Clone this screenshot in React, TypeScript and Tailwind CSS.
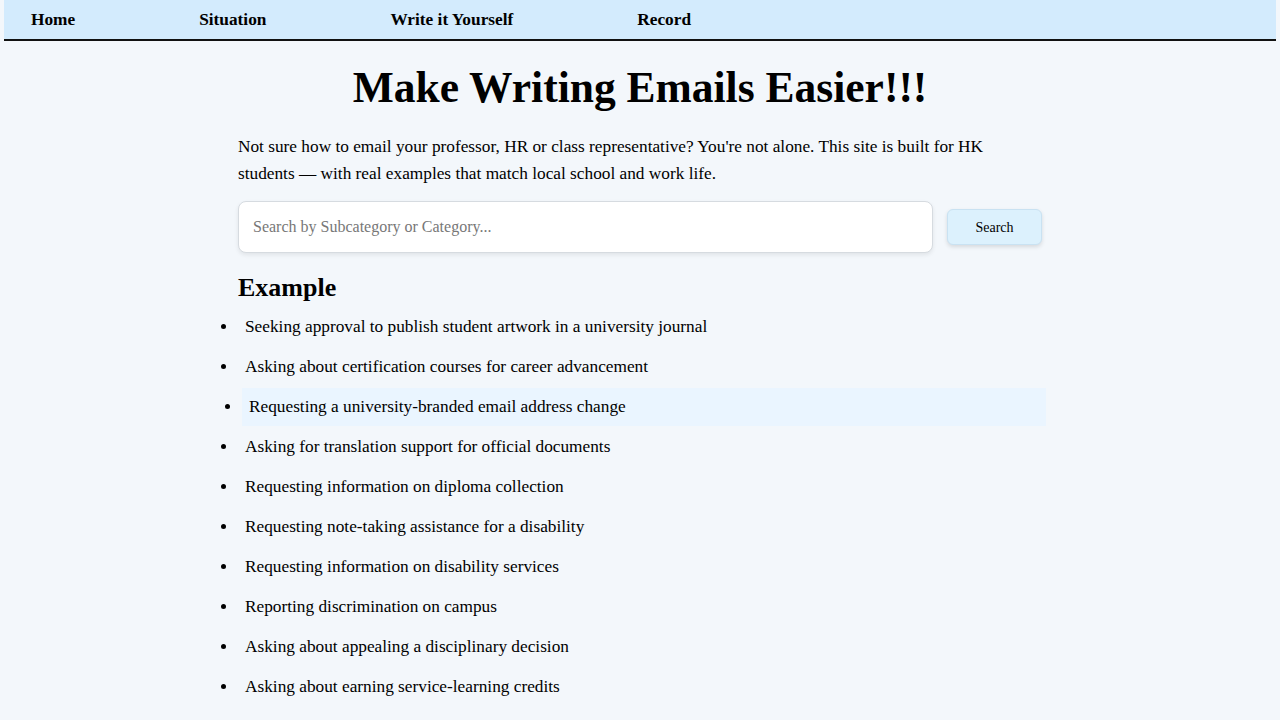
import React from "react";

const items = [
  "Seeking approval to publish student artwork in a university journal",
  "Asking about certification courses for career advancement",
  "Requesting a university-branded email address change",
  "Asking for translation support for official documents",
  "Requesting information on diploma collection",
  "Requesting note-taking assistance for a disability",
  "Requesting information on disability services",
  "Reporting discrimination on campus",
  "Asking about appealing a disciplinary decision",
  "Asking about earning service-learning credits",
];

export default function App() {
  return (
    <div
      className="min-h-[720px] bg-[#f3f7fb] text-black"
      style={{ fontFamily: '"Liberation Serif", "Times New Roman", serif' }}
    >
      <nav className="mx-[4px] flex h-[41px] items-center gap-[124px] border-b-2 border-[#111] bg-[#d3ebfd] pl-[27px] text-[17.3px] font-bold">
        <span>Home</span>
        <span>Situation</span>
        <span>Write it Yourself</span>
        <span>Record</span>
      </nav>
      <main className="mx-auto w-[804px]">
        <h1 className="mt-[19px] text-center text-[43.5px] font-bold leading-[54px]">
          Make Writing Emails Easier!!!
        </h1>
        <p className="mt-[19px] text-[17.3px] leading-[27px]">
          Not sure how to email your professor, HR or class representative? You're not alone. This site is built for HK
          students — with real examples that match local school and work life.
        </p>
        <div className="mt-[14px] flex items-center gap-[14px]">
          <input
            className="h-[52px] flex-1 rounded-[8px] border border-[#d6dbe0] bg-white px-[14px] text-[16px] shadow-[0_2px_4px_rgba(0,0,0,0.08)] outline-none placeholder:text-[#777]"
            placeholder="Search by Subcategory or Category..."
            style={{ fontFamily: '"Liberation Serif", "Times New Roman", serif' }}
          />
          <button
            className="h-[36px] w-[95px] rounded-[6px] border border-[#c9e2f2] bg-[#dcf1fd] text-[14px] shadow-[0_2px_4px_rgba(0,0,0,0.12)]"
            style={{ fontFamily: '"Liberation Serif", "Times New Roman", serif' }}
          >
            Search
          </button>
        </div>
        <h2 className="mt-[20px] text-[26px] font-bold leading-[30px]">Example</h2>
        <ul className="mt-[5px] list-disc text-[17.3px]">
          {items.map((t, i) => (
            <li
              key={t}
              className={
                "mb-[2px] py-[8px] pl-[7px] leading-[22px] " +
                (i === 2 ? "translate-x-[4px] bg-[#eaf5ff]" : "")
              }
            >
              {t}
            </li>
          ))}
        </ul>
      </main>
    </div>
  );
}
